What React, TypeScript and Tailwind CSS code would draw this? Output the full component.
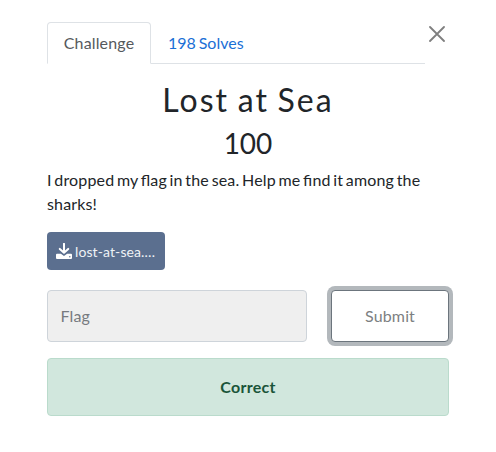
function DownloadIcon() {
  return (
    <svg width="16" height="16" viewBox="0 0 16 16" fill="none" className="shrink-0 text-white" aria-hidden="true">
      <path d="M8 0.8V9.2M3.8 5.9 8 9.8 12.2 5.9" stroke="currentColor" strokeWidth="2" strokeLinecap="round" strokeLinejoin="round" />
      <path
        fillRule="evenodd"
        fill="currentColor"
        d="M1 10.8H4.9L8 13 11.1 10.8H15Q16 10.8 16 11.8V15Q16 16 15 16H1Q0 16 0 15V11.8Q0 10.8 1 10.8ZM13.8 12.9A.75.75 0 1 0 13.8 14.4.75.75 0 1 0 13.8 12.9Z"
      />
    </svg>
  );
}

export default function App() {
  return (
    <div className="h-[452px] w-[496px] overflow-hidden bg-white pt-[22px] pl-[47px] font-['Lato','Liberation_Sans',sans-serif] text-[16px] leading-6 tracking-[0.15px] text-[#212529] [font-feature-settings:'liga'_1] [word-spacing:-1.55px]">
      <div className="flex w-[402px] items-start">
        <div className="flex h-[42px] w-[378px] border-b border-[#dee2e6]">
          <button className="h-[42px] w-[104px] rounded-t-[4px] border border-[#dee2e6] border-b-white bg-white text-[#55595c]">Challenge</button>
          <button className="ml-[17px] h-[42px] tracking-normal text-[#1a6fd6] [word-spacing:-1.2px]">198 Solves</button>
        </div>
        <button aria-label="Close" className="mt-1 ml-1 text-[#7f7f7f]">
          <svg width="16" height="16" viewBox="0 0 16 16" fill="none" stroke="currentColor" strokeWidth="1.8" strokeLinecap="round"><path d="M1 1 15 15M15 1 1 15" /></svg>
        </button>
      </div>
      <div className="w-[402px]">
        <h2 className="mt-[15px] text-center text-[32px] leading-[42px] tracking-[2px]">Lost at Sea</h2>
        <h3 className="mt-[5px] text-center text-[28px] leading-[34px] tracking-normal">100</h3>
        <p className="mt-2">I dropped my flag in the sea. Help me find it among the sharks!</p>
        <button className="mt-4 flex h-[38px] w-[118px] items-center gap-[3px] rounded-[4px] bg-[#5b6f8f] pl-[9px] text-[14px] tracking-[0.1px] text-[#eef2f6]">
          <DownloadIcon />
          <span className="pt-0.5">lost-at-sea.…</span>
        </button>
        <div className="mt-5 flex justify-between">
          <input placeholder="Flag" className="h-[52px] w-[260px] rounded-[4px] border border-[#ced4da] bg-[#efefef] px-[12.5px] pb-0.5 placeholder:text-[#777b7f]" />
          <button className="h-[52px] w-[118px] rounded-[4px] border border-[#6c757d] bg-white text-[#7c7f82] ring-4 ring-[#b3b8bc]">Submit</button>
        </div>
        <div className="mt-4 flex h-[58px] items-center justify-center rounded-[4px] border border-[#badbcc] bg-[#d1e7dd] font-bold tracking-[0.25px] text-[#1a5539]">Correct</div>
      </div>
    </div>
  );
}
